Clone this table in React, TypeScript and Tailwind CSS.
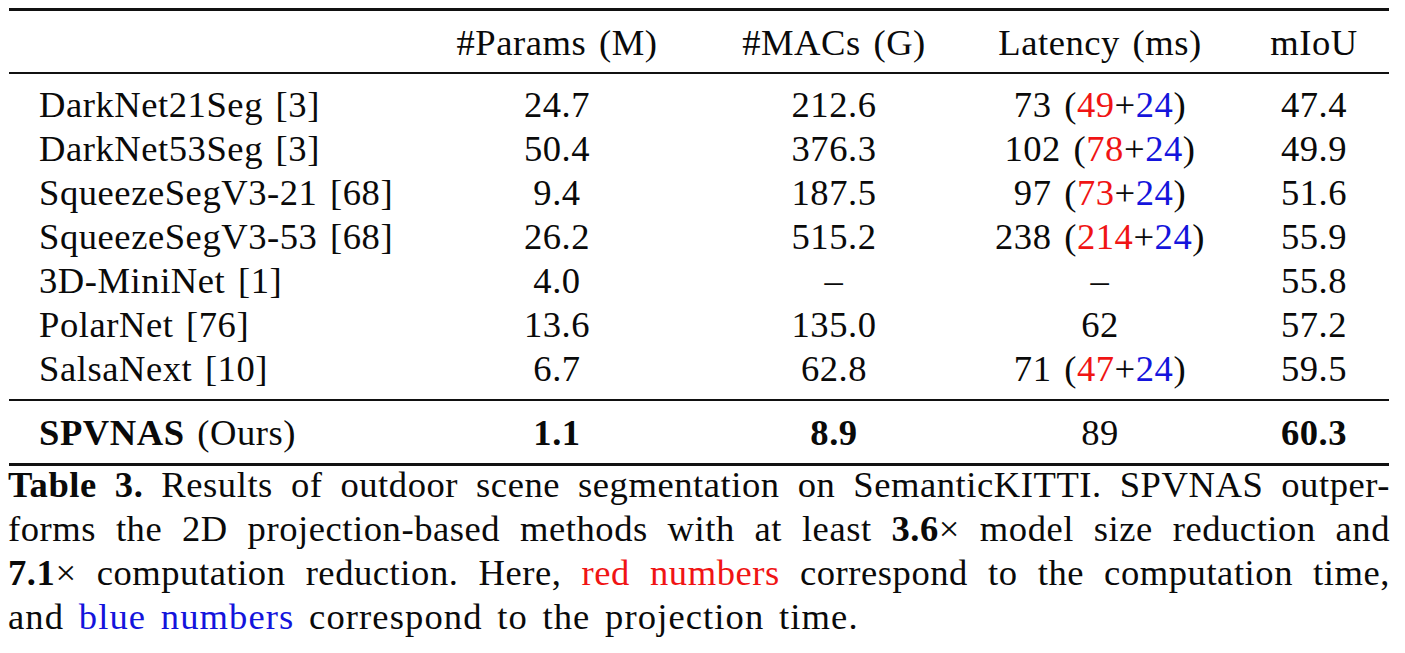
import React from 'react'

type Row = {
  name: string
  params: string
  macs: string
  total: string
  comp?: string
  proj?: string
  miou: string
}

const ROWS: Row[] = [
  { name: 'DarkNet21Seg [3]', params: '24.7', macs: '212.6', total: '73', comp: '49', proj: '24', miou: '47.4' },
  { name: 'DarkNet53Seg [3]', params: '50.4', macs: '376.3', total: '102', comp: '78', proj: '24', miou: '49.9' },
  { name: 'SqueezeSegV3-21 [68]', params: '9.4', macs: '187.5', total: '97', comp: '73', proj: '24', miou: '51.6' },
  { name: 'SqueezeSegV3-53 [68]', params: '26.2', macs: '515.2', total: '238', comp: '214', proj: '24', miou: '55.9' },
  { name: '3D-MiniNet [1]', params: '4.0', macs: '–', total: '–', miou: '55.8' },
  { name: 'PolarNet [76]', params: '13.6', macs: '135.0', total: '62', miou: '57.2' },
  { name: 'SalsaNext [10]', params: '6.7', macs: '62.8', total: '71', comp: '47', proj: '24', miou: '59.5' },
]

const grid = 'grid grid-cols-[398px_300px_254px_278px_150px] h-[44px] leading-[44px] whitespace-nowrap'

function Latency({ row }: { row: Row }) {
  if (!row.comp) return <>{row.total}</>
  return (
    <>
      {row.total} (<span className="text-[#f01414]">{row.comp}</span>+
      <span className="text-[#1414dc]">{row.proj}</span>)
    </>
  )
}

export default function App() {
  return (
    <div className="w-[1405px] h-[653px] bg-white text-[#0a0a0a] pt-[8px] overflow-hidden font-['Liberation_Serif',serif] text-[36.6px] tracking-[0.015em] [word-spacing:0.08em]">
      <div className="ml-[9px] w-[1380px]">
        {/* toprule */}
        <div className="h-[3px] bg-[#111]" />

        <div className={`${grid} mt-[9.6px]`}>
          <div />
          <div className="text-center">#Params (M)</div>
          <div className="text-center">#MACs (G)</div>
          <div className="text-center">Latency (ms)</div>
          <div className="text-center">mIoU</div>
        </div>

        {/* midrule */}
        <div className="mt-[7.4px] h-[2px] bg-[#111]" />

        <div className="mt-[8.6px]">
          {ROWS.map((row) => (
            <div key={row.name} className={grid}>
              <div className="pl-[30px]">{row.name}</div>
              <div className="text-center">{row.params}</div>
              <div className="text-center">{row.macs}</div>
              <div className="text-center">
                <Latency row={row} />
              </div>
              <div className="text-center">{row.miou}</div>
            </div>
          ))}
        </div>

        <div className="mt-[8.4px] h-[2px] bg-[#111]" />

        <div className={`${grid} mt-[9.6px]`}>
          <div className="pl-[30px]">
            <span className="font-bold">SPVNAS</span> (Ours)
          </div>
          <div className="text-center font-bold">1.1</div>
          <div className="text-center font-bold">8.9</div>
          <div className="text-center">89</div>
          <div className="text-center font-bold">60.3</div>
        </div>

        {/* bottomrule */}
        <div className="mt-[8.4px] h-[3px] bg-[#111]" />
      </div>

      {/* caption */}
      <div className="ml-[8px] w-[1382px] mt-[-3.4px] leading-[44px]">
        <div className="text-justify [text-align-last:justify]">
          <span className="font-bold">Table 3.</span> Results of outdoor scene segmentation on SemanticKITTI. SPVNAS outper-
        </div>
        <div className="text-justify [text-align-last:justify]">
          forms the 2D projection-based methods with at least <span className="font-bold">3.6</span>× model size reduction and
        </div>
        <div className="text-justify [text-align-last:justify]">
          <span className="font-bold">7.1</span>× computation reduction. Here, <span className="text-[#f01414]">red numbers</span> correspond to the computation time,
        </div>
        <div className="tracking-[0.03em] [word-spacing:0.12em]">
          and <span className="text-[#1414dc]">blue numbers</span> correspond to the projection time.
        </div>
      </div>
    </div>
  )
}
